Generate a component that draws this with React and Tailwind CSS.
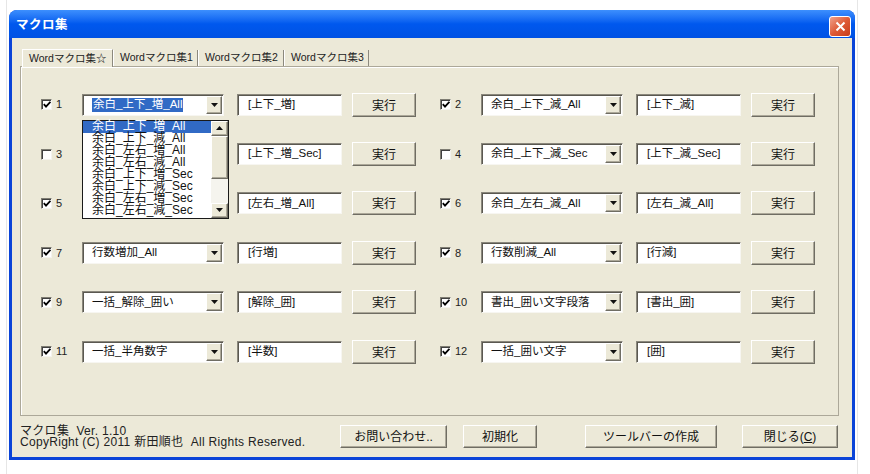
import React from "react";

const font = "font-['Liberation_Sans','Noto_Sans_CJK_JP',sans-serif]";

const rows = [
  [
    { n: 1, c: true, combo: "余白_上下_増_All", box: "[上下_増]", open: true },
    { n: 2, c: true, combo: "余白_上下_減_All", box: "[上下_減]" },
  ],
  [
    { n: 3, c: false, combo: "余白_上下_増_Sec", box: "[上下_増_Sec]" },
    { n: 4, c: false, combo: "余白_上下_減_Sec", box: "[上下_減_Sec]" },
  ],
  [
    { n: 5, c: true, combo: "余白_左右_増_All", box: "[左右_増_All]" },
    { n: 6, c: true, combo: "余白_左右_減_All", box: "[左右_減_All]" },
  ],
  [
    { n: 7, c: true, combo: "行数増加_All", box: "[行増]" },
    { n: 8, c: true, combo: "行数削減_All", box: "[行減]" },
  ],
  [
    { n: 9, c: true, combo: "一括_解除_囲い", box: "[解除_囲]" },
    { n: 10, c: true, combo: "書出_囲い文字段落", box: "[書出_囲]" },
  ],
  [
    { n: 11, c: true, combo: "一括_半角数字", box: "[半数]" },
    { n: 12, c: true, combo: "一括_囲い文字", box: "[囲]" },
  ],
];

const listItems = [
  "余白_上下_増_All",
  "余白_上下_減_All",
  "余白_左右_増_All",
  "余白_左右_減_All",
  "余白_上下_増_Sec",
  "余白_上下_減_Sec",
  "余白_左右_増_Sec",
  "余白_左右_減_Sec",
];

const raised =
  "bg-[#ece9d8] border border-t-white border-l-white border-b-[#6f6d63] border-r-[#6f6d63] shadow-[inset_-1px_-1px_0_#aca899]";
const sunken =
  "bg-white border border-t-[#8a877c] border-l-[#8a877c] border-b-[#f7f6f1] border-r-[#f7f6f1] shadow-[inset_1px_1px_0_#5a5850]";

function Arrow({ up }) {
  return (
    <svg width="7" height="4" viewBox="0 0 7 4">
      <path d={up ? "M0 4 L3.5 0 L7 4 Z" : "M0 0 L7 0 L3.5 4 Z"} fill="#111" />
    </svg>
  );
}

function CheckBox({ checked }) {
  return (
    <span className="w-[11px] h-[11px] shrink-0 flex items-center justify-center bg-white border border-t-[#7e7c72] border-l-[#7e7c72] border-b-[#f4f3ee] border-r-[#f4f3ee] shadow-[inset_1px_1px_0_#404040]">
      {checked && (
        <svg width="8" height="7" viewBox="0 0 8 7">
          <path d="M0.8 3.2 L3 5.6 L7.4 0.8" stroke="#000" strokeWidth="1.8" fill="none" />
        </svg>
      )}
    </span>
  );
}

function DropList() {
  return (
    <div className="absolute left-[-1px] top-[25px] w-[147px] h-[99px] bg-white border border-[#1a1a1a] flex z-10">
      <div className="flex-1 flex flex-col">
        {listItems.map((t, i) => (
          <div
            key={t}
            className={`h-[12.1px] leading-[11px] text-[12px] pl-[9px] whitespace-nowrap ${
              i === 0 ? "bg-[#316ac5] text-white" : "text-[#111]"
            }`}
          >
            {t}
          </div>
        ))}
      </div>
      <div className="w-[17px] flex flex-col bg-[#f5f4ee]">
        <div className={`h-[15px] flex items-center justify-center ${raised}`}>
          <Arrow up />
        </div>
        <div className={`h-[43px] ${raised}`}></div>
        <div className="flex-1"></div>
        <div className={`h-[15px] flex items-center justify-center ${raised}`}>
          <Arrow />
        </div>
      </div>
    </div>
  );
}

function Group({ item }) {
  return (
    <div className="flex items-center">
      <CheckBox checked={item.c} />
      <span className="w-[30px] pl-[4px] text-[11px] text-[#222]">{item.n}</span>
      <div className={`relative w-[142px] h-[22px] flex items-center justify-between ${sunken}`}>
        <span className="pl-[9px] text-[11.5px] whitespace-nowrap text-[#111]">
          {item.open ? (
            <span className="bg-[#316ac5] text-white px-[1px] pb-[2px]">{item.combo}</span>
          ) : (
            item.combo
          )}
        </span>
        <span className={`w-[16px] h-[18px] mr-px flex items-center justify-center ${raised}`}>
          <Arrow />
        </span>
        {item.open && <DropList />}
      </div>
      <div className={`ml-[13px] w-[105px] h-[22px] flex items-center pl-[10px] text-[11.5px] whitespace-nowrap text-[#111] ${sunken}`}>
        {item.box}
      </div>
      <button className={`ml-[10px] w-[64px] h-[24px] pt-[2px] text-[12px] text-[#111] ${raised}`}>実行</button>
    </div>
  );
}

export default function App() {
  const tabs = [
    { t: "Wordマクロ集☆", w: "w-[91px]", sel: true },
    { t: "Wordマクロ集1", w: "w-[85px]" },
    { t: "Wordマクロ集2", w: "w-[86px]" },
    { t: "Wordマクロ集3", w: "w-[85px]" },
  ];
  return (
    <div className={`w-[870px] h-[474px] bg-white pl-[6px] overflow-hidden ${font}`}>
      <div className="w-[852px] h-full border-x border-[#e6e6e6] pt-[10px] pl-[2px]">
        <div className="w-[846px] h-[450px] rounded-t-[8px] overflow-hidden bg-[#0b44d8] flex flex-col">
          {/* title bar */}
          <div className="h-[28px] shrink-0 bg-gradient-to-b from-[#3d8ffd] via-[#0058ee] to-[#0052e4] flex items-center justify-between pl-[7px] pr-[4px]">
            <span className="text-white font-bold text-[12.5px] mt-[3px] tracking-[0.5px]">マクロ集</span>
            <span className="w-[22px] h-[21px] mt-[5px] rounded-[3px] border border-white bg-gradient-to-br from-[#eea08a] via-[#de5a36] to-[#c83c18] flex items-center justify-center">
              <svg width="11" height="11" viewBox="0 0 11 11">
                <path d="M1.5 1.5 L9.5 9.5 M9.5 1.5 L1.5 9.5" stroke="#fff" strokeWidth="2" />
              </svg>
            </span>
          </div>

          {/* client */}
          <div className="flex-1 mx-[3px] mb-[3px] bg-[#ece9d8] flex flex-col">
            <div className="pt-[10px] pl-[8px]">
              <div className="flex items-end h-[18px] pl-[2px]">
                {tabs.map((tab) => (
                  <div
                    key={tab.t}
                    className={`${tab.w} flex items-center pl-[6px] text-[10.5px] whitespace-nowrap text-[#222] border-l border-l-white border-r border-r-[#8c897e] ${
                      tab.sel ? "h-[18px] relative z-10 -mb-px bg-[#ece9d8] border-t border-t-white" : "h-[16px]"
                    }`}
                  >
                    {tab.t}
                  </div>
                ))}
              </div>
              <div className="w-[819px] h-[350px] border border-[#aca899] shadow-[inset_1px_1px_0_#fff] pt-[13px] pl-[20px]">
                {rows.map((pair, i) => (
                  <div key={i} className="h-[49.4px] grid grid-cols-[399px_399px] items-center">
                    <Group item={pair[0]} />
                    <Group item={pair[1]} />
                  </div>
                ))}
              </div>
            </div>

            {/* footer */}
            <div className="flex-1 flex items-center pl-[8px]">
              <div className="w-[320px] text-[12px] leading-[11px] tracking-[0.3px] text-[#222] whitespace-pre">
                <div>マクロ集  Ver. 1.10</div>
                <div>CopyRight (C) 2011 新田順也  All Rights Reserved.</div>
              </div>
              <button className={`w-[107px] h-[23px] text-[12px] text-[#111] ${raised}`}>お問い合わせ..</button>
              <button className={`ml-[16px] w-[74px] h-[23px] text-[12px] text-[#111] ${raised}`}>初期化</button>
              <button className={`ml-[48px] w-[132px] h-[23px] text-[12px] text-[#111] ${raised}`}>ツールバーの作成</button>
              <button className={`ml-[25px] w-[96px] h-[23px] text-[12px] text-[#111] ${raised}`}>
                閉じる(<span className="underline">C</span>)
              </button>
            </div>
          </div>
        </div>
      </div>
    </div>
  );
}
